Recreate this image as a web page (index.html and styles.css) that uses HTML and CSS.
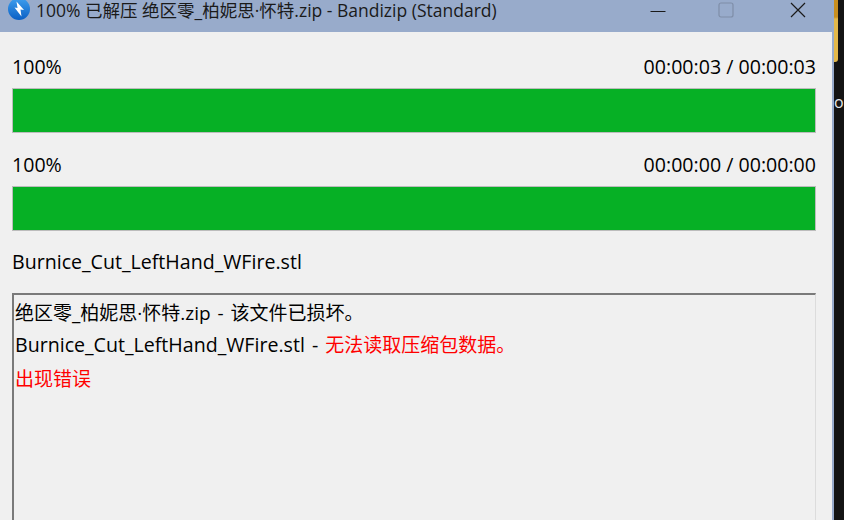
FILE: index.html

```html
<!DOCTYPE html>
<html lang="en">
<head>
    <meta charset="UTF-8">
    <meta name="viewport" content="width=device-width, initial-scale=1.0">
    <title>Bandizip</title>
    <link rel="stylesheet" href="styles.css">
</head>
<body>
    <div class="window">
        <!-- Title bar -->
        <header class="titlebar">
            <svg class="app-icon" width="22" height="22" viewBox="0 0 22 22">
                <defs>
                    <linearGradient id="icon-blue" x1="0" y1="0" x2="0" y2="1">
                        <stop offset="0" stop-color="#3f9fee"/>
                        <stop offset="1" stop-color="#0a5fc4"/>
                    </linearGradient>
                </defs>
                <circle cx="11" cy="11" r="11" fill="url(#icon-blue)"/>
                <path d="M8.5 3.5 L9.5 10 L6.5 9.5 L13.5 18.5 L12.5 11.5 L16 12 Z" fill="#fff"/>
            </svg>
            <span class="title">100% 已解压 绝区零_柏妮思·怀特.zip - Bandizip (Standard)</span>
            <div class="controls">
                <svg class="control control-min" width="16" height="16" viewBox="0 0 16 16">
                    <path d="M0.5 9.5 H15.5" stroke="#1a1a1a" stroke-width="1" fill="none"/>
                </svg>
                <svg class="control control-max" width="16" height="16" viewBox="0 0 16 16">
                    <rect x="1" y="1" width="14" height="14" rx="2" stroke="#7f8ea8" stroke-width="1.2" fill="none"/>
                </svg>
                <svg class="control control-close" width="16" height="16" viewBox="0 0 16 16">
                    <path d="M1 1 L15 15 M15 1 L1 15" stroke="#1a1a1a" stroke-width="1.2" fill="none"/>
                </svg>
            </div>
        </header>

        <main class="content">
            <div class="progress-head">
                <span>100%</span>
                <span>00:00:03 / 00:00:03</span>
            </div>
            <div class="progress-bar"></div>

            <div class="progress-head">
                <span>100%</span>
                <span>00:00:00 / 00:00:00</span>
            </div>
            <div class="progress-bar"></div>

            <p class="current-file">Burnice_Cut_LeftHand_WFire.stl</p>

            <!-- Log box -->
            <div class="log">
                <p class="log-first">绝区零_柏妮思·怀特.zip - 该文件已损坏。</p>
                <p>Burnice_Cut_LeftHand_WFire.stl - <span class="error">无法读取压缩包数据。</span></p>
                <p class="error">出现错误</p>
            </div>
        </main>
    </div>

    <!-- What shows behind the window -->
    <aside class="backdrop">
        <div class="backdrop-tab"></div>
        <span class="backdrop-text">o</span>
    </aside>
</body>
</html>
```

FILE: styles.css

```css
* {
    margin: 0;
    padding: 0;
    box-sizing: border-box;
}

html, body {
    height: 520px;
    overflow: hidden;
}

body {
    display: flex;
    font-family: "Open Sans", "Noto Sans CJK SC", sans-serif;
    font-size: 19.6px;
    color: #000;
    background: #141414;
}

/* Window */
.window {
    width: 834px;
    height: 520px;
    flex-shrink: 0;
    display: flex;
    flex-direction: column;
    background: #f0f0f0;
    border-right: 2px solid #98abcb;
}

/* Title bar */
.titlebar {
    height: 32px;
    flex-shrink: 0;
    display: flex;
    align-items: flex-start;
    padding-left: 8px;
    background: #98abcb;
}

.app-icon {
    flex-shrink: 0;
    margin-top: -2px;
}

.title {
    margin-left: 6px;
    font-size: 17.5px;
    line-height: 20px;
    color: #1a1a1a;
    white-space: nowrap;
}

.controls {
    display: flex;
    align-items: center;
    gap: 52px;
    margin-left: auto;
    margin-right: 26px;
    height: 18px;
    margin-top: 1px;
}

.control-max {
    margin-right: 4px;
}

/* Progress rows */
.content {
    flex: 1;
    display: flex;
    flex-direction: column;
    padding: 0 16px 0 12px;
    min-height: 0;
}

.progress-head {
    display: flex;
    justify-content: space-between;
    height: 26px;
    margin-top: 22px;
    line-height: 26px;
}

.progress-head + .progress-bar + .progress-head {
    margin-top: 19px;
}

.progress-bar {
    height: 45px;
    margin-top: 8px;
    background: #06b025;
    border: 1px solid #bcbcbc;
}

.current-file {
    margin-top: 18px;
    line-height: 26px;
}

/* Log box */
.log {
    flex: 1;
    margin-top: 18px;
    padding: 3px 0 0 1px;
    border: 2px solid #7a7a7a;
    border-right: 1px solid #dcdcdc;
    border-bottom: 0;
    line-height: 34px;
    word-spacing: 2px;
}

.log-first {
    font-size: 19px;
    line-height: 30px;
}

.error {
    font-size: 19px;
    color: #ff0000;
}

/* Behind the window */
.backdrop {
    flex: 1;
    position: relative;
}

.backdrop-tab {
    width: 4px;
    height: 62px;
    background: linear-gradient(#c98f1f 0, #c98f1f 17px, #e3b84a 19px);
    border-radius: 0 0 3px 0;
}

.backdrop-text {
    position: absolute;
    left: 0;
    top: 90px;
    font-size: 16px;
    line-height: 24px;
    color: #e8e8e8;
}
```
